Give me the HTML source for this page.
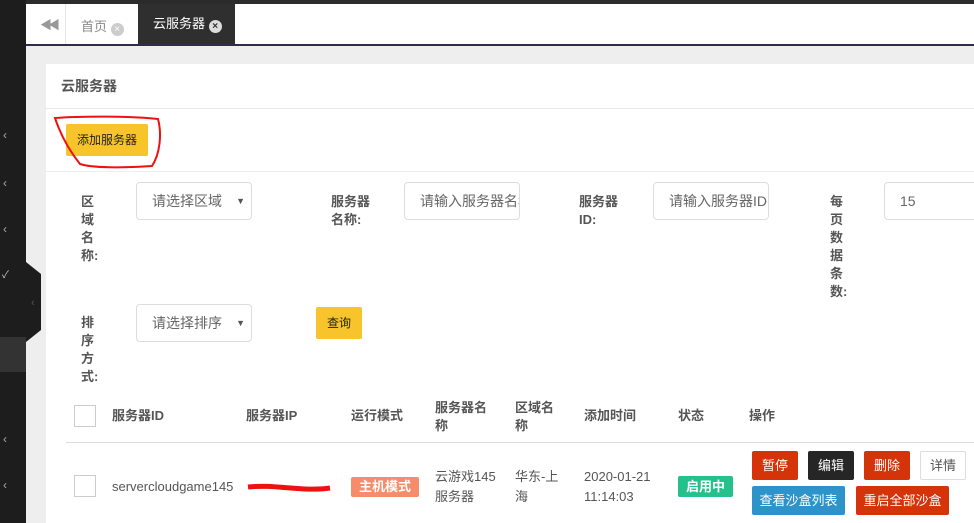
<!DOCTYPE html>
<html><head><meta charset="utf-8"><style>
*{box-sizing:border-box;margin:0;padding:0}
body{width:974px;height:523px;overflow:hidden;position:relative;background:#eeeeee;font-family:"Liberation Sans","Noto Sans CJK SC",sans-serif;font-size:13px;color:#333}
.a{position:absolute}
.lbl{position:absolute;font-weight:bold;color:#555;font-size:13px;line-height:18px}
.inp{position:absolute;background:#fff;border:1px solid #ddd;border-radius:4px;height:38px;color:#666;font-size:14px;line-height:36px;padding-left:15px;white-space:nowrap;overflow:hidden}
.btn{position:absolute;height:29px;line-height:29px;color:#fff;text-align:center;border-radius:2px;font-size:13px}
.th{position:absolute;font-weight:bold;color:#555;font-size:13px;line-height:18px}
.td{position:absolute;color:#555;font-size:13px;line-height:20px}
.cb{position:absolute;width:22px;height:22px;border:1px solid #ccc;background:#fff}
</style></head><body>
<div class="a" style="left:0;top:0;width:974px;height:4px;background:#2b2b2b"></div>
<div class="a" style="left:0;top:0;width:26px;height:523px;background:#1d1d1d"></div>
<div class="a" style="left:0;top:337px;width:26px;height:35px;background:#333"></div>
<svg class="a" style="left:26px;top:262px" width="16" height="80"><polygon points="0,0 15,12 15,68 0,80" fill="#1d1d1d"/><text x="5" y="44" fill="#555" font-size="11">‹</text></svg>
<div class="a" style="left:3px;top:128px;color:#aaa;font-size:12px">‹</div>
<div class="a" style="left:3px;top:176px;color:#aaa;font-size:12px">‹</div>
<div class="a" style="left:3px;top:222px;color:#aaa;font-size:12px">‹</div>
<div class="a" style="left:2px;top:266px;color:#ccc;font-size:10px">✓</div>
<div class="a" style="left:3px;top:432px;color:#aaa;font-size:12px">‹</div>
<div class="a" style="left:3px;top:478px;color:#aaa;font-size:12px">‹</div>
<div class="a" style="left:26px;top:4px;width:948px;height:42px;background:#fff;border-bottom:2px solid #2f2d45"></div>
<div class="a" style="left:65px;top:4px;width:1px;height:40px;background:#e5e5e5"></div>
<div class="a" style="left:40px;top:16px;color:#999;font-size:12px;letter-spacing:-4px">◀◀</div>
<div class="a" style="left:81px;top:16px;color:#888">首页 <span style="display:inline-block;width:13px;height:13px;border-radius:50%;background:#ccc;color:#fff;font-size:10px;line-height:13px;text-align:center;vertical-align:-1px">×</span></div>
<div class="a" style="left:138px;top:4px;width:97px;height:40px;background:#2f2f2f;color:#fff;line-height:40px;padding-left:15px">云服务器 <span style="display:inline-block;width:13px;height:13px;border-radius:50%;background:#ddd;color:#2f2f2f;font-size:10px;line-height:13px;text-align:center;font-weight:bold;vertical-align:-1px">×</span></div>
<div class="a" style="left:46px;top:64px;width:928px;height:459px;background:#fff"></div>
<div class="a" style="left:61px;top:76px;font-size:14px;font-weight:bold;color:#555">云服务器</div>
<div class="a" style="left:46px;top:108px;width:928px;height:1px;background:#e7e7e7"></div>
<div class="a" style="left:66px;top:124px;width:82px;height:32px;background:#f8c42b;border-radius:2px;line-height:32px;text-align:center;color:#222;font-size:12px">添加服务器</div>
<svg class="a" style="left:52px;top:114px" width="115" height="56"><path d="M3,4 C30,2 80,2 106,5 C110,20 108,40 100,52 C70,54 40,54 28,50 C20,40 10,25 3,4Z" fill="none" stroke="#e11" stroke-width="2"/></svg>
<div class="a" style="left:46px;top:171px;width:928px;height:1px;background:#eee"></div>
<div class="lbl" style="left:81px;top:193px;width:14px">区域名称:</div>
<div class="inp" style="left:136px;top:182px;width:116px">请选择区域<span style="position:absolute;right:6px;font-size:9px;color:#555">▼</span></div>
<div class="lbl" style="left:331px;top:193px">服务器<br>名称:</div>
<div class="inp" style="left:404px;top:182px;width:116px">请输入服务器名称</div>
<div class="lbl" style="left:579px;top:193px">服务器<br>ID:</div>
<div class="inp" style="left:653px;top:182px;width:116px">请输入服务器ID</div>
<div class="lbl" style="left:830px;top:193px;width:14px">每页数据条数:</div>
<div class="inp" style="left:884px;top:182px;width:100px">15</div>
<div class="lbl" style="left:81px;top:314px;width:14px">排序方式:</div>
<div class="inp" style="left:136px;top:304px;width:116px">请选择排序<span style="position:absolute;right:6px;font-size:9px;color:#555">▼</span></div>
<div class="a" style="left:316px;top:307px;width:46px;height:32px;background:#f8c42b;border-radius:2px;line-height:32px;text-align:center;color:#222;font-size:12px">查询</div>
<div class="cb" style="left:74px;top:405px"></div>
<div class="th" style="left:112px;top:407px">服务器ID</div>
<div class="th" style="left:246px;top:407px">服务器IP</div>
<div class="th" style="left:351px;top:407px">运行模式</div>
<div class="th" style="left:435px;top:399px">服务器名<br>称</div>
<div class="th" style="left:515px;top:399px">区域名<br>称</div>
<div class="th" style="left:584px;top:407px">添加时间</div>
<div class="th" style="left:678px;top:407px">状态</div>
<div class="th" style="left:749px;top:407px">操作</div>
<div class="a" style="left:66px;top:442px;width:908px;height:1px;background:#ddd"></div>
<div class="cb" style="left:74px;top:475px"></div>
<div class="td" style="left:112px;top:477px">servercloudgame145</div>
<svg class="a" style="left:244px;top:480px" width="90" height="16"><path d="M4,7 C30,4 60,12 86,8" stroke="#e11" stroke-width="5" fill="none"/></svg>
<div class="a" style="left:351px;top:477px;width:68px;height:20px;background:#f58d6a;color:#fff;font-weight:bold;text-align:center;line-height:20px;border-radius:2px">主机模式</div>
<div class="td" style="left:435px;top:467px">云游戏145<br>服务器</div>
<div class="td" style="left:515px;top:467px">华东-上<br>海</div>
<div class="td" style="left:584px;top:467px">2020-01-21<br>11:14:03</div>
<div class="a" style="left:678px;top:476px;width:55px;height:21px;background:#26c08d;color:#fff;font-weight:bold;text-align:center;line-height:21px;border-radius:2px">启用中</div>
<div class="btn" style="left:752px;top:451px;width:46px;background:#d5340a">暂停</div>
<div class="btn" style="left:808px;top:451px;width:46px;background:#262626">编辑</div>
<div class="btn" style="left:864px;top:451px;width:46px;background:#d5340a">删除</div>
<div class="btn" style="left:920px;top:451px;width:46px;background:#fff;border:1px solid #ddd;color:#555;line-height:27px">详情</div>
<div class="btn" style="left:752px;top:486px;width:93px;background:#2d93c9">查看沙盒列表</div>
<div class="btn" style="left:856px;top:486px;width:93px;background:#d5340a">重启全部沙盒</div>
</body></html>
